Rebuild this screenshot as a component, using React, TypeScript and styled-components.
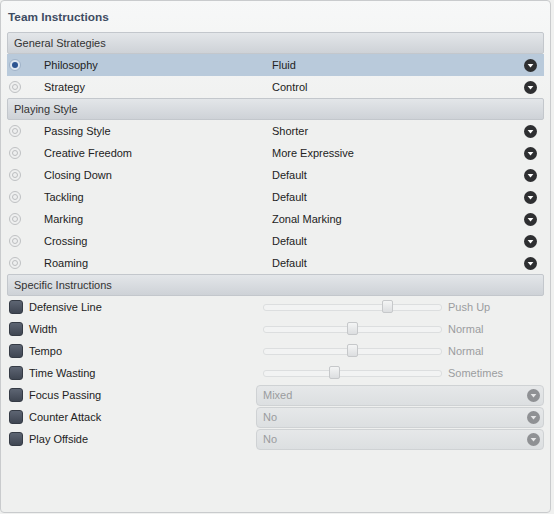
import styled, { createGlobalStyle } from "styled-components";

const GlobalStyle = createGlobalStyle`
  body {
    margin: 0;
    background: #f0f1f0;
    font-family: "Liberation Sans", Arial, sans-serif;
  }
`;

const Panel = styled.div`
  box-sizing: border-box;
  width: 551px;
  height: 513px;
  border: 1px solid #c9cbcd;
  border-radius: 4px;
  background: linear-gradient(#f7f8f8, #eff0ef 120px);
  padding: 0 6px 0 6px;
  display: flex;
  flex-direction: column;
`;

const Title = styled.h1`
  margin: 0;
  height: 31px;
  display: flex;
  align-items: center;
  padding-left: 1px;
  box-sizing: border-box;
  font-size: 11.8px;
  font-weight: bold;
  color: #3e4c62;
`;

const SectionHeader = styled.div`
  box-sizing: border-box;
  height: 22px;
  display: flex;
  align-items: center;
  padding-left: 6px;
  font-size: 11px;
  color: #333;
  background: linear-gradient(#e3e6e9, #ced2d7);
  border: 1px solid #c3c7cc;
  border-radius: 2px;
`;

const Row = styled.div<{ $selected?: boolean }>`
  height: 22px;
  display: grid;
  grid-template-columns: 37px 228px 1fr 20px;
  align-items: center;
  font-size: 11px;
  color: #222;
  background: ${(p) => (p.$selected ? "#b9cadb" : "transparent")};
`;

const Radio = styled.span<{ $on?: boolean }>`
  box-sizing: border-box;
  width: 12px;
  height: 12px;
  margin-left: 2px;
  border-radius: 50%;
  border: 1px solid ${(p) => (p.$on ? "#9fb2c8" : "#bfc1c3")};
  background: ${(p) => (p.$on ? "#dfe7f0" : "#eeefef")};
  display: flex;
  align-items: center;
  justify-content: center;
  &::after {
    content: "";
    box-sizing: border-box;
    width: 6px;
    height: 6px;
    border-radius: 50%;
    background: ${(p) => (p.$on ? "#2d5491" : "transparent")};
    border: ${(p) => (p.$on ? "none" : "1px solid #bcbec0")};
  }
`;

const Arrow = ({ muted }: { muted?: boolean }) => (
  <svg width="13" height="13" viewBox="0 0 13 13">
    <circle cx="6.5" cy="6.5" r="6.5" fill={muted ? "#8f9194" : "#2e2f31"} />
    <path d="M3.6 5 L9.4 5 L6.5 8.6 Z" fill={muted ? "#e6e7e8" : "#fff"} />
  </svg>
);

const Spec = styled.div`
  height: 22px;
  display: grid;
  grid-template-columns: 22px 227px 1fr;
  align-items: center;
  font-size: 11px;
  color: #222;
`;

const Check = styled.span`
  box-sizing: border-box;
  width: 14px;
  height: 14px;
  margin-left: 2px;
  border-radius: 3px;
  background: linear-gradient(#5d6573, #3f4652);
  border: 1px solid #353b45;
`;

const SliderWrap = styled.div`
  display: grid;
  grid-template-columns: 179px 1fr;
  align-items: center;
  padding-left: 7px;
  gap: 6px;
`;

const Track = styled.div`
  position: relative;
  height: 5px;
  border: 1px solid #dcdedf;
  border-radius: 3px;
  background: #f2f3f3;
`;

const Thumb = styled.span`
  position: absolute;
  top: -5px;
  width: 11px;
  height: 13px;
  margin-left: -6px;
  box-sizing: border-box;
  border: 1px solid #c6c8ca;
  border-radius: 2px;
  background: linear-gradient(#f4f5f5, #dcdee0);
`;

const SliderValue = styled.span`
  color: #9b9d9f;
`;

const Select = styled.div`
  box-sizing: border-box;
  height: 21px;
  display: flex;
  align-items: center;
  justify-content: space-between;
  padding: 0 3px 0 6px;
  border: 1px solid #cfd2d4;
  border-radius: 4px;
  background: linear-gradient(#e6e8e9, #dcdfe1);
  color: #9a9c9e;
`;

const general = [
  ["Philosophy", "Fluid", true],
  ["Strategy", "Control", false],
] as const;

const playing = [
  ["Passing Style", "Shorter"],
  ["Creative Freedom", "More Expressive"],
  ["Closing Down", "Default"],
  ["Tackling", "Default"],
  ["Marking", "Zonal Marking"],
  ["Crossing", "Default"],
  ["Roaming", "Default"],
];

const sliders = [
  ["Defensive Line", 70, "Push Up"],
  ["Width", 50, "Normal"],
  ["Tempo", 50, "Normal"],
  ["Time Wasting", 40, "Sometimes"],
] as const;

const selects = [
  ["Focus Passing", "Mixed"],
  ["Counter Attack", "No"],
  ["Play Offside", "No"],
];

export default function App() {
  return (
    <>
      <GlobalStyle />
      <Panel>
        <Title>Team Instructions</Title>
        <SectionHeader>General Strategies</SectionHeader>
        {general.map(([label, value, sel]) => (
          <Row key={label} $selected={sel}>
            <Radio $on={sel} />
            <span>{label}</span>
            <span>{value}</span>
            <Arrow />
          </Row>
        ))}
        <SectionHeader>Playing Style</SectionHeader>
        {playing.map(([label, value]) => (
          <Row key={label}>
            <Radio />
            <span>{label}</span>
            <span>{value}</span>
            <Arrow />
          </Row>
        ))}
        <SectionHeader>Specific Instructions</SectionHeader>
        {sliders.map(([label, pos, value]) => (
          <Spec key={label}>
            <Check />
            <span>{label}</span>
            <SliderWrap>
              <Track>
                <Thumb style={{ left: `${pos}%` }} />
              </Track>
              <SliderValue>{value}</SliderValue>
            </SliderWrap>
          </Spec>
        ))}
        {selects.map(([label, value]) => (
          <Spec key={label}>
            <Check />
            <span>{label}</span>
            <Select>
              <span>{value}</span>
              <Arrow muted />
            </Select>
          </Spec>
        ))}
      </Panel>
    </>
  );
}
